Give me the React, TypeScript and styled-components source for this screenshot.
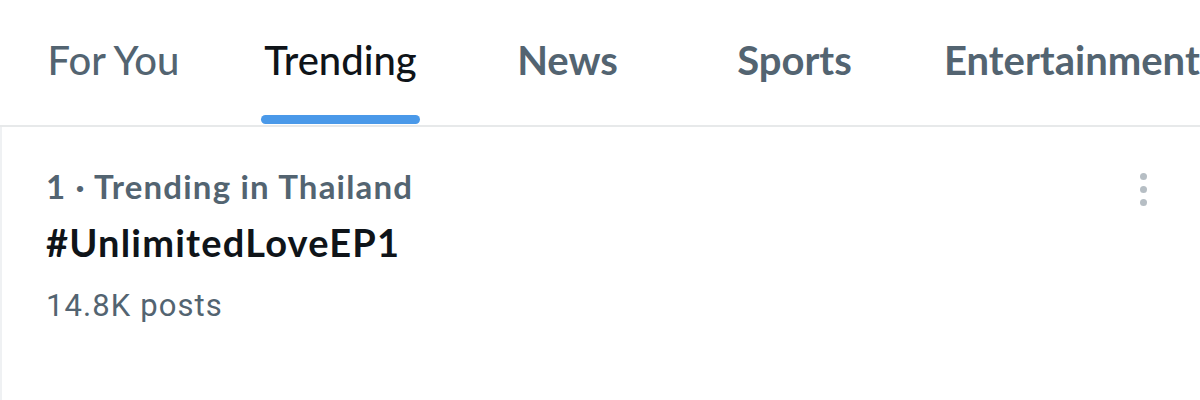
import React from "react";
import styled, { createGlobalStyle } from "styled-components";

const Global = createGlobalStyle`
  html, body { margin: 0; padding: 0; background: #ffffff; }
  body { font-family: Lato, "Noto Sans", sans-serif; overflow: hidden; }
`;

const Page = styled.div`
  width: 1200px;
  height: 400px;
  overflow: hidden;
  display: flex;
  flex-direction: column;
  background: #fff;
`;

const TabBar = styled.nav`
  display: flex;
  height: 125px;
  border-bottom: 2px solid #e7e9ea;
  flex-shrink: 0;
`;

const Tab = styled.div`
  min-width: 227px;
  box-sizing: border-box;
  padding: 0 36px;
  display: flex;
  justify-content: center;
  flex-shrink: 0;
  white-space: nowrap;
`;

const TabInner = styled.div<{ $active?: boolean; $weight: number }>`
  display: flex;
  flex-direction: column;
  justify-content: space-between;
  padding-top: 35px;
  font-size: 40px;
  line-height: 50px;
  font-weight: ${(p) => p.$weight};
  color: ${(p) => (p.$active ? "#0f1419" : "#536471")};
`;

const Indicator = styled.div<{ $show?: boolean }>`
  margin: 0 -3px 1px;
  height: 9px;
  border-radius: 5px;
  background: ${(p) => (p.$show ? "#4a99e9" : "transparent")};
`;

const Feed = styled.section`
  flex: 1;
  border-left: 2px solid #eff1f3;
`;

const TrendRow = styled.div`
  display: flex;
  justify-content: space-between;
  padding: 37px 53px 0 44px;
`;

const TrendBody = styled.div`
  display: flex;
  flex-direction: column;
`;

const Context = styled.div`
  font-size: 33px;
  line-height: 44px;
  font-weight: 700;
  letter-spacing: 1.2px;
  color: #536471;
`;

const Tag = styled.div`
  margin-top: 10px;
  font-size: 38px;
  line-height: 48px;
  font-weight: 700;
  letter-spacing: 1.2px;
  color: #0f1419;
`;

const Count = styled.div`
  margin-top: 20px;
  font-family: Roboto, "Noto Sans", sans-serif;
  font-size: 31px;
  line-height: 40px;
  letter-spacing: 1.1px;
  color: #536471;
`;

const MoreButton = styled.div`
  display: flex;
  flex-direction: column;
  gap: 6px;
  padding-top: 9px;
`;

const Dot = styled.span`
  width: 7px;
  height: 7px;
  border-radius: 50%;
  background: #b6bec4;
`;

const tabs = [
  { label: "For You", weight: 500 },
  { label: "Trending", weight: 500, active: true },
  { label: "News", weight: 700 },
  { label: "Sports", weight: 700 },
  { label: "Entertainment", weight: 700 },
];

export default function App() {
  return (
    <>
      <Global />
      <Page>
        <TabBar>
          {tabs.map((t) => (
            <Tab key={t.label}>
              <TabInner $active={t.active} $weight={t.weight}>
                <span>{t.label}</span>
                <Indicator $show={t.active} />
              </TabInner>
            </Tab>
          ))}
        </TabBar>
        <Feed>
          <TrendRow>
            <TrendBody>
              <Context>1 · Trending in Thailand</Context>
              <Tag>#UnlimitedLoveEP1</Tag>
              <Count>14.8K posts</Count>
            </TrendBody>
            <MoreButton>
              <Dot />
              <Dot />
              <Dot />
            </MoreButton>
          </TrendRow>
        </Feed>
      </Page>
    </>
  );
}
